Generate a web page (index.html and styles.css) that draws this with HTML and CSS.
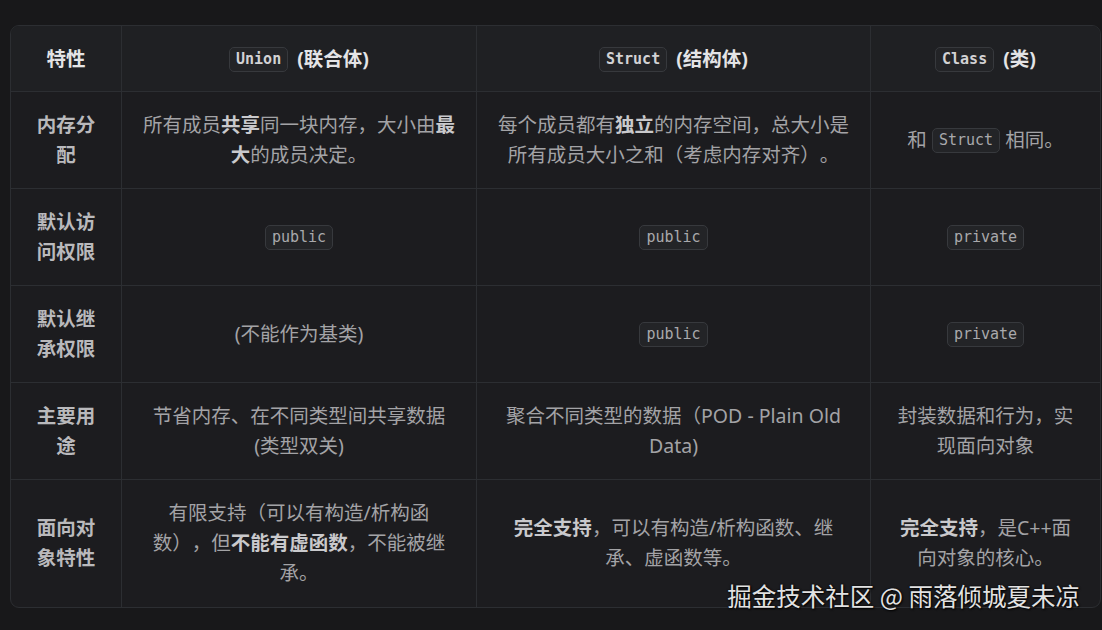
FILE: index.html
```html
<!DOCTYPE html>
<html lang="zh-CN">
<head>
<meta charset="utf-8">
<title>Union / Struct / Class</title>
<link rel="stylesheet" href="styles.css">
</head>
<body>
<div class="page">
  <div class="table-wrap">
    <table class="cmp">
      <colgroup>
        <col class="c1"><col class="c2"><col class="c3"><col class="c4">
      </colgroup>
      <thead>
        <tr>
          <th>特性</th>
          <th><code>Union</code> (联合体)</th>
          <th><code>Struct</code> (结构体)</th>
          <th><code>Class</code> (类)</th>
        </tr>
      </thead>
      <tbody>
        <tr>
          <td class="k">内存分配</td>
          <td>所有成员<b>共享</b>同一块内存，大小由<b>最大</b>的成员决定。</td>
          <td>每个成员都有<b>独立</b>的内存空间，总大小是所有成员大小之和（考虑内存对齐）。</td>
          <td>和 <code>Struct</code> 相同。</td>
        </tr>
        <tr>
          <td class="k">默认访问权限</td>
          <td><code>public</code></td>
          <td><code>public</code></td>
          <td><code>private</code></td>
        </tr>
        <tr>
          <td class="k">默认继承权限</td>
          <td>(不能作为基类)</td>
          <td><code>public</code></td>
          <td><code>private</code></td>
        </tr>
        <tr>
          <td class="k">主要用途</td>
          <td>节省内存、在不同类型间共享数据 (类型双关)</td>
          <td>聚合不同类型的数据（POD - Plain Old Data)</td>
          <td>封装数据和行为，实现面向对象</td>
        </tr>
        <tr>
          <td class="k">面向对象特性</td>
          <td>有限支持（可以有构造/析构函数），但<b>不能有虚函数</b>，不能被继承。</td>
          <td><b>完全支持</b>，可以有构造/析构函数、继承、虚函数等。</td>
          <td><b>完全支持</b>，是C++面向对象的核心。</td>
        </tr>
      </tbody>
    </table>
    <div class="watermark">掘金技术社区 @ 雨落倾城夏未凉</div>
  </div>
</div>
</body>
</html>
```

FILE: styles.css
```css
html, body {
  margin: 0;
  padding: 0;
  background: #18181a;
}
body {
  font-family: "Noto Sans", "Noto Sans CJK SC", sans-serif;
  text-spacing-trim: space-all;
  width: 1102px;
  height: 630px;
  overflow: hidden;
}
.page {
  padding: 25px 0 0 10px;
}
.table-wrap {
  position: relative;
  width: 1089px;
}
.cmp {
  width: 1089px;
  table-layout: fixed;
  border-collapse: separate;
  border-spacing: 0;
  border: 1px solid #2c2e32;
  border-radius: 9px;
  background: #1c1c1f;
  overflow: hidden;
}
.c1 { width: 111px; }
.c2 { width: 355px; }
.c3 { width: 394px; }
.c4 { width: 229px; }
.cmp th, .cmp td {
  text-align: center;
  vertical-align: middle;
  padding: 18px 20px;
  font-size: 19.5px;
  line-height: 30px;
  border-right: 1px solid #2c2e32;
  border-bottom: 1px solid #2c2e32;
}
.cmp th:last-child, .cmp td:last-child { border-right: none; }
.cmp tbody tr:last-child td { border-bottom: none; padding-bottom: 19px; }
.cmp th {
  background: #1f2023;
  color: #e4e4e6;
  font-weight: 700;
  padding-top: 18px;
  padding-bottom: 17px;
}
.cmp td {
  color: #a3a3a6;
  font-weight: 400;
}
.cmp td.k {
  color: #b9b9bc;
  font-weight: 700;
}
.cmp b {
  color: #c9c9cc;
  font-weight: 700;
}
code {
  font-family: "DejaVu Sans Mono", "Liberation Mono", monospace;
  font-size: 15px;
  line-height: 21px;
  padding: 1px 6px;
  border: 1px solid #37393d;
  border-radius: 5px;
  background: #232427;
  color: #a9a9ac;
  font-weight: 400;
  display: inline-block;
  vertical-align: 2px;
}
th code {
  color: #d2d2d4;
  font-weight: 700;
  margin-right: 4px;
}
.watermark {
  position: absolute;
  right: 19px;
  bottom: -4px;
  font-family: "Noto Sans CJK SC", sans-serif;
  font-size: 24.5px;
  line-height: 32px;
  color: #e2e2e2;
  text-shadow: 0 0 2px #000, 1px 1px 2px #000;
}
```
